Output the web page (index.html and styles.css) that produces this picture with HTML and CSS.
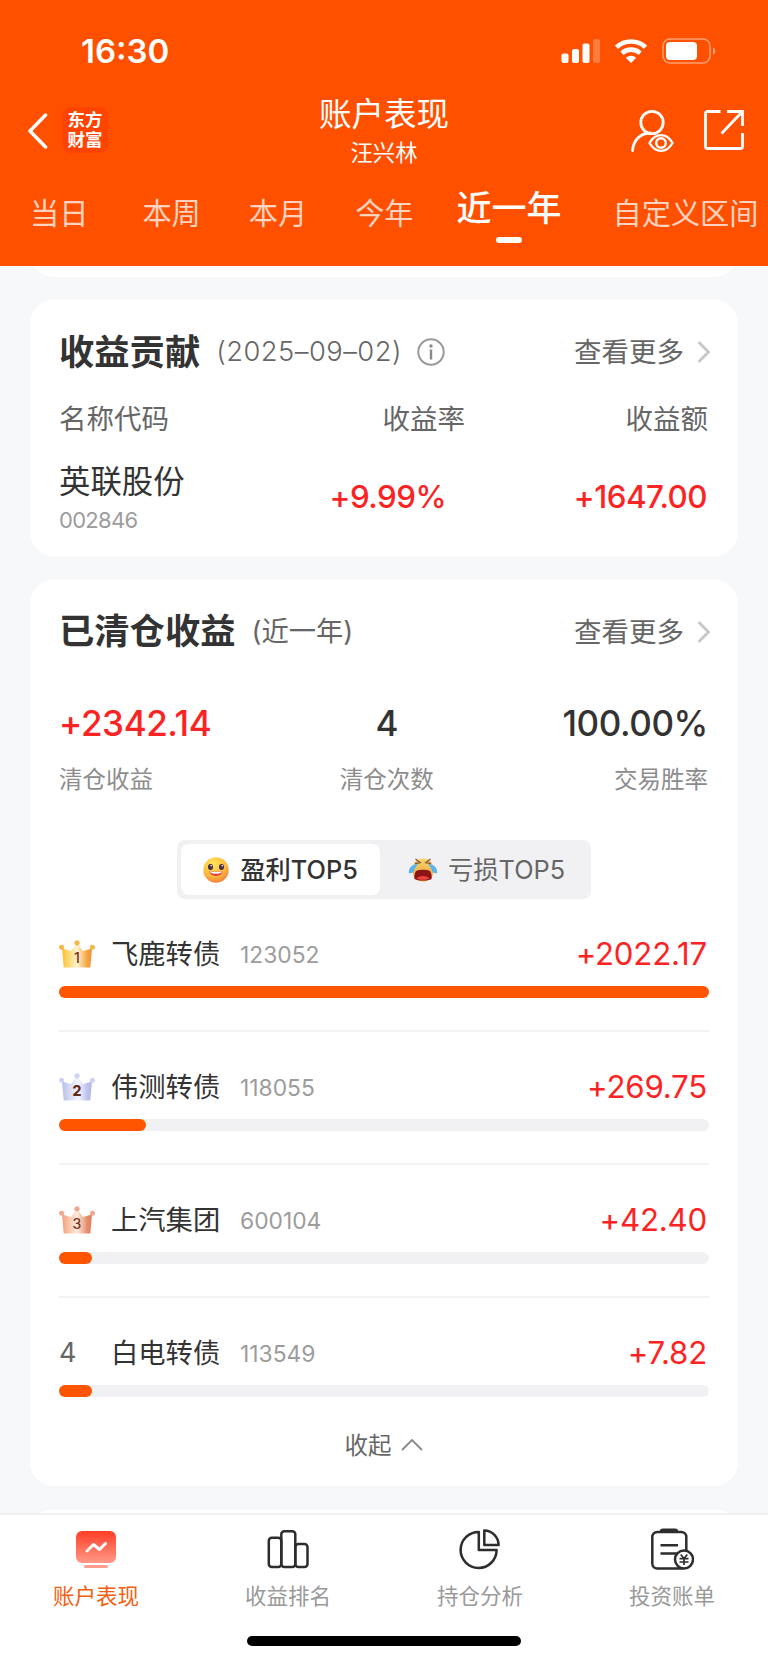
FILE: index.html
```html
<!DOCTYPE html>
<html lang="zh-CN">
<head>
    <meta charset="UTF-8">
    <meta name="viewport" content="width=device-width, initial-scale=1.0">
    <title>账户表现</title>
    <link rel="stylesheet" href="styles.css">
</head>
<body>
    <header>
        <div class="status-bar">
            <span class="time">16:30</span>
            <svg class="status-icons" width="156" height="26" viewBox="0 0 156 26">
                <g fill="#fff">
                    <rect x="1.5" y="15.5" width="7" height="9.5" rx="2"/>
                    <rect x="12" y="11" width="7" height="14" rx="2"/>
                    <rect x="22.5" y="5.5" width="7" height="19.5" rx="2"/>
                    <rect x="33" y="1" width="7" height="24" rx="2" opacity=".25"/>
                    <path d="M71 25l-5.200-5.300a8 8 0 0 1 10.400 0z"/>
                </g>
                <path d="M56.500 9.200a21.500 21.500 0 0 1 29 0M61.900 15.200a13.500 13.500 0 0 1 18.200 0" fill="none" stroke="#fff" stroke-width="4.600"/>
                <rect x="103" y="1" width="47" height="24" rx="7" fill="none" stroke="#fff" stroke-width="1.500" opacity=".45"/>
                <rect x="106" y="4" width="31" height="18" rx="4" fill="#fff"/>
                <path d="M153 9.500c3 1.200 3 6 0 7.200z" fill="#fff" opacity=".5"/>
            </svg>
        </div>
        <div class="title-bar">
            <div class="title-left">
                <svg width="22" height="36" viewBox="0 0 22 36"><path d="M18.500 2L3 18l15.500 16" fill="none" stroke="#fff" stroke-width="3.500" stroke-linecap="round" stroke-linejoin="round"/></svg>
                <div class="logo">东方<br>财富</div>
            </div>
            <div class="title-text">
                <h1>账户表现</h1>
                <p>汪兴林</p>
            </div>
            <div class="title-right">
                <svg width="44" height="44" viewBox="0 0 44 44" fill="none" stroke="#fff" stroke-width="2.800" stroke-linecap="round">
                    <circle cx="22" cy="13.500" r="11.200"/>
                    <path d="M2.500 41.500C3.500 31 10 24.500 20 24"/>
                    <path d="M19.500 34c6-10.500 17-10.500 23 0c-6 10.500-17 10.500-23 0z" stroke-width="2.400" stroke-linejoin="round"/>
                    <circle cx="31" cy="34" r="4.800" stroke-width="2.400"/>
                </svg>
                <svg width="42" height="42" viewBox="0 0 42 42" fill="none" stroke="#fff" stroke-width="2.800">
                    <path d="M17.500 2.500H4.500a2 2 0 0 0-2 2v33a2 2 0 0 0 2 2h33a2 2 0 0 0 2-2V24M24 2.500h15.500V17M39 3L18.500 24.500"/>
                </svg>
            </div>
        </div>
        <nav class="tabs">
            <a>当日</a>
            <a>本周</a>
            <a>本月</a>
            <a>今年</a>
            <a class="active">近一年</a>
            <a>自定义区间</a>
        </nav>
    </header>

    <main>
        <div class="card card-above"></div>

        <section class="card profit-card">
            <div class="card-head">
                <h2>收益贡献</h2>
                <span class="sub date">(2025–09–02)</span>
                <svg class="info" width="28" height="28" viewBox="0 0 28 28"><circle cx="14" cy="14" r="12.700" fill="none" stroke="#999" stroke-width="2"/><circle cx="14" cy="8" r="1.700" fill="#888"/><path d="M14 11.500v10" stroke="#888" stroke-width="2.400"/></svg>
                <a class="more"><span>查看更多</span><svg width="13" height="24" viewBox="0 0 13 24"><path d="M1.500 2l10 10l-10 10" fill="none" stroke="#c8c8c8" stroke-width="3"/></svg></a>
            </div>
            <div class="table-row table-head">
                <span>名称代码</span>
                <span>收益率</span>
                <span>收益额</span>
            </div>
            <div class="table-row table-body">
                <div>
                    <p class="stock">英联股份</p>
                    <p class="code">002846</p>
                </div>
                <span class="red rate">+9.99%</span>
                <span class="red">+1647.00</span>
            </div>
        </section>

        <section class="card cleared-card">
            <div class="card-head">
                <h2>已清仓收益</h2>
                <span class="sub">(近一年)</span>
                <a class="more"><span>查看更多</span><svg width="13" height="24" viewBox="0 0 13 24"><path d="M1.500 2l10 10l-10 10" fill="none" stroke="#c8c8c8" stroke-width="3"/></svg></a>
            </div>
            <div class="stats">
                <div><b class="red">+2342.14</b><span>清仓收益</span></div>
                <div><b>4</b><span>清仓次数</span></div>
                <div><b>100.00%</b><span>交易胜率</span></div>
            </div>
            <div class="switch">
                <div class="on">
                    <svg width="26" height="26" viewBox="0 0 26 26">
                        <defs><radialGradient id="smile" cx=".4" cy=".25" r=".8"><stop offset="0" stop-color="#ffe45c"/><stop offset=".6" stop-color="#fdbc3c"/><stop offset="1" stop-color="#f07a3c"/></radialGradient></defs>
                        <circle cx="13" cy="13" r="12.700" fill="url(#smile)"/>
                        <ellipse cx="7.500" cy="10" rx="2.500" ry="3" fill="#43304a"/><ellipse cx="18.500" cy="10" rx="2.500" ry="3" fill="#43304a"/>
                        <circle cx="8.200" cy="8.800" r=".8" fill="#fff"/><circle cx="19.200" cy="8.800" r=".8" fill="#fff"/>
                        <path d="M6.500 14c3.500 1 9.500 1 13 0c-.5 6.500-12.500 6.500-13 0z" fill="#e23a3f"/>
                        <path d="M7 14.200c3.500 1 8.500 1 12 0c-.5 3.500-11.500 3.500-12 0z" fill="#fff"/>
                    </svg>
                    <span>盈利TOP5</span>
                </div>
                <div class="off">
                    <svg width="30" height="26" viewBox="0 0 30 26">
                        <defs><linearGradient id="cry" x1="0" y1="0" x2="0" y2="1"><stop offset="0" stop-color="#f9d46c"/><stop offset="1" stop-color="#f2a03c"/></linearGradient></defs>
                        <path d="M15 1.500c7 0 11 5 10.500 12c-.4 7-4 11-10.500 11s-10.100-4-10.500-11C4 6.500 8 1.500 15 1.500z" fill="url(#cry)"/>
                        <path d="M7.500 2l4.500 3.500l-5 1M22.500 2L18 5.500l5 1" fill="none" stroke="#8a5a34" stroke-width="1.500"/>
                        <path d="M10 7C5 7 .5 10 .8 16c2.700 1 5.200-.5 5.700-4zM20 7c5 0 9.500 3 9.200 9c-2.700 1-5.200-.5-5.700-4z" fill="#58b4f0"/>
                        <path d="M8 14c3-1.800 11-1.800 14 0c1.500 2.500 2 5 1.500 8c-4 2-13 2-17 0c-.5-3 0-5.500 1.500-8z" fill="#8c1414"/>
                        <path d="M8.500 21.500c2-3.500 11-3.500 13 0c-3 1.800-10 1.800-13 0z" fill="#e8453c"/>
                    </svg>
                    <span>亏损TOP5</span>
                </div>
            </div>

            <ul class="rank">
                <li>
                    <div class="rank-row">
                        <svg class="crown" width="36" height="28" viewBox="0 0 36 28">
                            <defs><linearGradient id="gold"><stop offset="0" stop-color="#fbc02d"/><stop offset=".5" stop-color="#fff3cf"/><stop offset=".85" stop-color="#f5a13c"/><stop offset="1" stop-color="#f0913a"/></linearGradient></defs>
                            <g fill="url(#gold)"><path d="M3 8.500l9 2.500l6-8l6 8l9-2.500l-1.700 19H4.700z"/></g>
                            <g fill="#f7b54a"><circle cx="18" cy="2.800" r="2.600"/><circle cx="2.600" cy="7.300" r="2.500"/><circle cx="33.400" cy="7.300" r="2.500"/></g>
                            <text x="18" y="23" text-anchor="middle">1</text>
                        </svg>
                        <span class="name">飞鹿转债</span><span class="code">123052</span><span class="amount">+2022.17</span>
                    </div>
                    <div class="bar"><i style="width: 100%"></i></div>
                </li>
                <li>
                    <div class="rank-row">
                        <svg class="crown" width="36" height="28" viewBox="0 0 36 28">
                            <defs><linearGradient id="silver"><stop offset="0" stop-color="#b9c0ea"/><stop offset=".55" stop-color="#f4f6ff"/><stop offset=".85" stop-color="#bcc1ec"/><stop offset="1" stop-color="#b4b9ea"/></linearGradient></defs>
                            <g fill="url(#silver)"><path d="M3 8.500l9 2.500l6-8l6 8l9-2.500l-1.700 19H4.700z"/></g>
                            <g fill="#ced3f3"><circle cx="18" cy="2.800" r="2.600"/><circle cx="2.600" cy="7.300" r="2.500"/><circle cx="33.400" cy="7.300" r="2.500"/></g>
                            <text class="second" x="18" y="23" text-anchor="middle">2</text>
                        </svg>
                        <span class="name">伟测转债</span><span class="code">118055</span><span class="amount">+269.75</span>
                    </div>
                    <div class="bar"><i style="width: 13.4%"></i></div>
                </li>
                <li>
                    <div class="rank-row">
                        <svg class="crown" width="36" height="28" viewBox="0 0 36 28">
                            <defs><linearGradient id="bronze"><stop offset="0" stop-color="#f4a07a"/><stop offset=".5" stop-color="#fdece0"/><stop offset=".85" stop-color="#e58a68"/><stop offset="1" stop-color="#e07f5e"/></linearGradient></defs>
                            <g fill="url(#bronze)"><path d="M3 8.500l9 2.500l6-8l6 8l9-2.500l-1.700 19H4.700z"/></g>
                            <g fill="#f0a88c"><circle cx="18" cy="2.800" r="2.600"/><circle cx="2.600" cy="7.300" r="2.500"/><circle cx="33.400" cy="7.300" r="2.500"/></g>
                            <text x="18" y="23" text-anchor="middle">3</text>
                        </svg>
                        <span class="name">上汽集团</span><span class="code">600104</span><span class="amount">+42.40</span>
                    </div>
                    <div class="bar"><i style="width: 5.1%"></i></div>
                </li>
                <li>
                    <div class="rank-row">
                        <span class="num">4</span>
                        <span class="name">白电转债</span><span class="code">113549</span><span class="amount">+7.82</span>
                    </div>
                    <div class="bar"><i style="width: 5.1%"></i></div>
                </li>
            </ul>
            <div class="fold"><span>收起</span><svg width="24" height="14" viewBox="0 0 24 14"><path d="M2 12L12 2l10 10" fill="none" stroke="#888" stroke-width="1.800"/></svg></div>
        </section>

        <div class="card card-below"></div>
    </main>

    <footer>
        <div class="footer-tabs">
            <a class="active">
                <svg width="44" height="44" viewBox="0 0 44 44">
                    <defs><linearGradient id="screen" x1="0" y1="0" x2="0" y2="1"><stop offset="0" stop-color="#ff3d25"/><stop offset="1" stop-color="#ff9a88"/></linearGradient></defs>
                    <rect x="2" y="3" width="40" height="32" rx="6" fill="url(#screen)"/>
                    <rect x="10" y="37" width="24" height="3" rx="1.500" fill="#ff9d8c"/>
                    <path d="M13 23l6.500-6.500l6 5l6-6" fill="none" stroke="#fff" stroke-width="3" stroke-linecap="round" stroke-linejoin="round"/>
                </svg>
                账户表现
            </a>
            <a>
                <svg width="44" height="44" viewBox="0 0 44 44" fill="none" stroke="#2d2d2d" stroke-width="2.500">
                    <rect x="2.800" y="9.800" width="12.500" height="29.200" rx="3"/>
                    <rect x="15.300" y="3.300" width="14" height="35.700" rx="3"/>
                    <rect x="29.300" y="16" width="12.200" height="23" rx="3"/>
                </svg>
                收益排名
            </a>
            <a>
                <svg width="44" height="44" viewBox="0 0 44 44" fill="none" stroke="#2d2d2d" stroke-width="2.500" stroke-linejoin="round">
                    <path d="M20.800 4A18 18 0 1 0 38.600 22H20.800z"/>
                    <path d="M26.300 2.400V17h14.300A14.600 14.600 0 0 0 26.300 2.400z"/>
                </svg>
                持仓分析
            </a>
            <a>
                <svg width="44" height="44" viewBox="0 0 44 44" fill="none" stroke="#2d2d2d" stroke-width="2.500">
                    <rect x="2.300" y="4" width="34" height="36.500" rx="5"/>
                    <path d="M11 3.500c0-1 1-1.700 2-1.700h12c1 0 2 .7 2 1.700z" fill="#2d2d2d"/>
                    <path d="M10.500 17.300h17.500M10.500 25.500h17" stroke-width="2.600"/>
                    <circle cx="34" cy="31.500" r="9" fill="#fff"/>
                    <path d="M30.700 26.500l3.300 4l3.300-4M34 30.500v6.500M29.500 30.700h9M29.500 34h9" stroke-width="1.700"/>
                </svg>
                投资账单
            </a>
        </div>
        <div class="home-line"></div>
    </footer>
</body>
</html>
```

FILE: styles.css
```css
* {
    box-sizing: border-box;
}

body {
    margin: 0;
    width: 768px;
    height: 1663px;
    overflow: hidden;
    display: flex;
    flex-direction: column;
    font-family: Inter, "Noto Sans CJK SC", sans-serif;
    font-weight: 400;
    color: #333;
    background-color: #f6f8fa;
}

h1, h2, p, ul {
    margin: 0;
    padding: 0;
}

svg {
    display: block;
    flex: none;
}

span, a, p {
    white-space: nowrap;
}

/* Orange header */
header {
    height: 266px;
    flex: none;
    background-color: #ff5000;
    color: white;
}

.status-bar {
    display: flex;
    align-items: center;
    justify-content: space-between;
    height: 64px;
    padding: 38px 52px 0 81px;
}

.time {
    font-size: 33px;
    font-weight: 600;
    line-height: 26px;
}

.title-bar {
    display: grid;
    grid-template-columns: 1fr auto 1fr;
    height: 108px;
    padding: 30px 23px 0;
}

.title-left {
    display: flex;
    align-items: flex-start;
    padding: 13px 0 0 4px;
}

.title-left svg {
    margin-top: 6px;
}

.logo {
    width: 46px;
    height: 46px;
    margin-left: 13px;
    padding-top: 3px;
    border-radius: 9px;
    background-color: #ff4300;
    text-align: center;
    font-size: 17.5px;
    font-weight: 700;
    line-height: 20px;
}

.title-text {
    text-align: center;
}

.title-text h1 {
    margin-top: 1px;
    font-size: 32.5px;
    font-weight: 400;
    line-height: 40px;
}

.title-text p {
    margin-top: 3px;
    font-size: 22.3px;
    line-height: 30px;
}

.title-right {
    display: flex;
    justify-content: flex-end;
    gap: 29px;
    padding-top: 15px;
}

.tabs {
    display: flex;
    align-items: flex-start;
    height: 94px;
    padding: 22px 0 0 30px;
    font-size: 29.2px;
    line-height: 40px;
    color: rgba(255, 255, 255, 0.75);
}

.tabs a {
    margin-right: 48px;
}

.tabs a:first-child {
    margin-right: 54px;
}

.tabs a:nth-child(4) {
    margin-right: 43px;
}

.tabs .active {
    display: flex;
    flex-direction: column;
    align-items: center;
    margin-top: -6px;
    margin-right: 51px;
    font-size: 35px;
    font-weight: 500;
    color: white;
}

.tabs .active::after {
    content: "";
    width: 26px;
    height: 6px;
    margin-top: 9px;
    border-radius: 3px;
    background-color: white;
}

/* Cards */
main {
    height: 1247px;
    overflow: hidden;
    padding: 0 30px;
}

.card {
    margin-bottom: 24px;
    padding: 0 29px;
    border-radius: 24px;
    background-color: white;
}

.card-above {
    height: 60px;
    margin-top: -49px;
    margin-bottom: 23px;
}

.card-below {
    height: 40px;
}

.profit-card {
    height: 256px;
    padding-top: 28px;
}

.card-head {
    display: flex;
    align-items: center;
    height: 50px;
}

h2 {
    font-size: 35.3px;
    font-weight: 700;
    line-height: 50px;
}

.sub {
    margin-left: 16px;
    font-size: 27.3px;
    line-height: 50px;
    color: #666;
}

.date {
    font-weight: 300;
    letter-spacing: 0.5px;
    padding-bottom: 2px;
}

.info {
    margin-left: 15px;
    margin-bottom: 2px;
}

.more {
    display: flex;
    align-items: center;
    gap: 13px;
    margin-left: auto;
    padding-bottom: 2px;
    font-size: 27.5px;
    line-height: 48px;
    color: #666;
}

.more svg {
    margin-right: -1px;
}

.cleared-card .more {
    padding-bottom: 0;
}

.table-row {
    display: grid;
    align-items: center;
    text-align: right;
}

.table-row > :first-child {
    text-align: left;
}

.table-head {
    grid-template-columns: 170px 236px 1fr;
    margin-top: 21px;
    padding-right: 1px;
    font-size: 27.5px;
    line-height: 40px;
    color: #666;
}

.table-body {
    grid-template-columns: 170px 219px 1fr;
    margin-top: 23px;
    font-size: 31.3px;
    font-weight: 500;
    letter-spacing: -0.5px;
}

.red {
    color: #fb2323;
}

.stock {
    font-size: 31.4px;
    font-weight: 400;
    line-height: 40px;
    letter-spacing: 0;
}

.code {
    font-size: 22.8px;
    font-weight: 400;
    line-height: 36px;
    color: #9c9c9c;
}

.table-body .code {
    font-size: 22px;
    letter-spacing: -0.7px;
}

.table-body .red {
    padding-right: 2px;
    padding-bottom: 6px;
}

.cleared-card {
    height: 906px;
    padding-top: 27px;
}

.stats {
    display: flex;
    justify-content: space-between;
    margin-top: 44px;
}

.stats div {
    display: flex;
    flex-direction: column;
    align-items: center;
}

.stats div:first-child {
    align-items: flex-start;
}

.stats div:last-child {
    align-items: flex-end;
    padding-right: 1px;
}

.stats b {
    font-size: 35px;
    font-weight: 500;
    line-height: 44px;
    letter-spacing: -0.4px;
}

.stats span {
    margin-top: 20px;
    font-size: 23.5px;
    line-height: 30px;
    color: #8c8c8c;
}

.switch {
    display: flex;
    width: 414px;
    height: 59px;
    margin: 45px auto 0;
    padding: 4px;
    border-radius: 8px;
    background-color: #f1f1f4;
}

.switch div {
    display: flex;
    align-items: center;
    justify-content: center;
    gap: 11px;
    flex: 1;
    font-size: 25.3px;
    line-height: 50px;
    color: #666;
}

.switch .off {
    justify-content: flex-start;
    gap: 10px;
    padding-left: 28px;
}

.switch .on {
    flex: none;
    width: 199px;
    border-radius: 8px;
    background-color: white;
    font-weight: 500;
    color: #333;
}

/* Ranking list */
.rank {
    list-style: none;
    margin-top: 34px;
}

.rank li {
    height: 133px;
}

.rank li:not(:last-child)::after {
    content: "";
    display: block;
    height: 2px;
    margin-top: 32px;
    background-color: #f3f3f5;
}

.rank-row {
    display: flex;
    align-items: center;
    height: 42px;
    line-height: 42px;
}

.crown text {
    font-size: 14px;
    font-weight: 500;
    fill: #7a3216;
}

.crown .second {
    font-weight: 800;
    fill: #63291c;
}

.num {
    width: 36px;
    font-size: 27px;
    color: #666;
}

.name {
    width: 129px;
    margin-left: 16px;
    padding-top: 2px;
    font-size: 27.3px;
    line-height: 42px;
}

.rank .code {
    padding-top: 1px;
}

.amount {
    margin-left: auto;
    padding-right: 2px;
    font-size: 31.2px;
    letter-spacing: -0.2px;
    color: #fb2323;
}

.bar {
    height: 12px;
    margin-top: 11px;
    border-radius: 6px;
    background-color: #f1f1f4;
}

.bar i {
    display: block;
    height: 12px;
    border-radius: 6px;
    background-color: #ff5400;
}

.fold {
    display: flex;
    align-items: center;
    justify-content: center;
    gap: 8px;
    height: 30px;
    margin-top: -35px;
    font-size: 23.5px;
    line-height: 30px;
    color: #666;
}

.fold span {
    padding-top: 2px;
}

/* Bottom navigation */
footer {
    height: 150px;
    flex: none;
    border-top: 2px solid #eff1f1;
    background-color: white;
}

.footer-tabs {
    display: flex;
    height: 121px;
    padding-top: 13px;
}

.footer-tabs a {
    display: flex;
    flex-direction: column;
    align-items: center;
    flex: 1;
    font-size: 21.5px;
    line-height: 30px;
    gap: 9px;
    color: #999;
}

.footer-tabs .active {
    color: #f2600f;
}

.home-line {
    width: 274px;
    height: 10px;
    margin: 0 auto;
    border-radius: 5px;
    background-color: black;
}
```
